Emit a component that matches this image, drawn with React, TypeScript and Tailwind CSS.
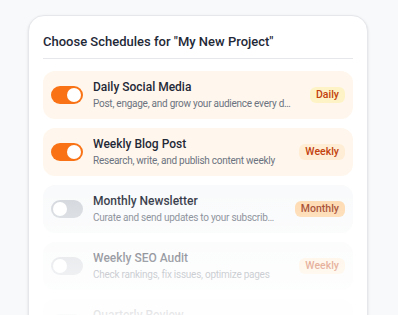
import React from "react";

type Schedule = {
  title: string;
  desc: string;
  freq: "Daily" | "Weekly" | "Monthly" | "Quarterly";
  on: boolean;
};

const schedules: Schedule[] = [
  { title: "Daily Social Media", desc: "Post, engage, and grow your audience every day", freq: "Daily", on: true },
  { title: "Weekly Blog Post", desc: "Research, write, and publish content weekly", freq: "Weekly", on: true },
  { title: "Monthly Newsletter", desc: "Curate and send updates to your subscribers", freq: "Monthly", on: false },
  { title: "Weekly SEO Audit", desc: "Check rankings, fix issues, optimize pages", freq: "Weekly", on: false },
  { title: "Quarterly Review", desc: "Review goals, metrics and plan next quarter", freq: "Quarterly", on: false },
];

const badgeClass: Record<Schedule["freq"], string> = {
  Daily: "bg-[#fef3c7] text-[#c2410c]",
  Weekly: "bg-[#ffedd5] text-[#c2410c]",
  Monthly: "bg-[#fed7aa] text-[#9a3412]",
  Quarterly: "bg-[#ffedd5] text-[#c2410c]",
};

function Toggle({ on }: { on: boolean }) {
  return (
    <div
      className={
        "flex h-[18px] w-8 shrink-0 items-center rounded-full px-[2px] " +
        (on ? "justify-end bg-[#f97316]" : "justify-start bg-[#d1d5db]")
      }
    >
      <div className="h-[14px] w-[14px] rounded-full bg-white" />
    </div>
  );
}

export default function App() {
  return (
    <div
      className="h-[315px] overflow-hidden bg-[#f8f9fa] px-[28px] pt-[15px]"
      style={{ fontFamily: "Roboto, sans-serif" }}
    >
      <div className="relative h-[330px] w-[340px] rounded-2xl border border-[#e5e7eb] bg-white px-[14px] pt-[17px] shadow-sm">
        <h2 className="border-b border-[#e5e7eb] pb-[7px] text-[13px] font-medium leading-[18px] text-[#1f2937]">
          Choose Schedules for "My New Project"
        </h2>
        <div className="mt-[12px] flex flex-col gap-[9px]">
          {schedules.map((s) => (
            <div
              key={s.title}
              className={
                "flex h-[48px] items-center gap-[10px] rounded-xl pl-2 pr-2 " +
                (s.on ? "bg-[#fff7ed]" : "bg-[#f9fafb]")
              }
            >
              <Toggle on={s.on} />
              <div className="min-w-0 flex-1">
                <div className="truncate text-[12px] font-medium leading-[17px] text-[#1f2937]">{s.title}</div>
                <div className="truncate text-[10px] leading-[15px] tracking-[-0.25px] text-[#6b7280]">{s.desc}</div>
              </div>
              <span className={"ml-2 shrink-0 rounded-md px-[6px] py-[1px] text-[10.5px] font-medium leading-[14px] " + badgeClass[s.freq]}>
                {s.freq}
              </span>
            </div>
          ))}
        </div>
        <div className="pointer-events-none absolute inset-x-0 top-[170px] h-[145px] bg-gradient-to-b from-white/0 via-white/55 to-white" />
      </div>
    </div>
  );
}
